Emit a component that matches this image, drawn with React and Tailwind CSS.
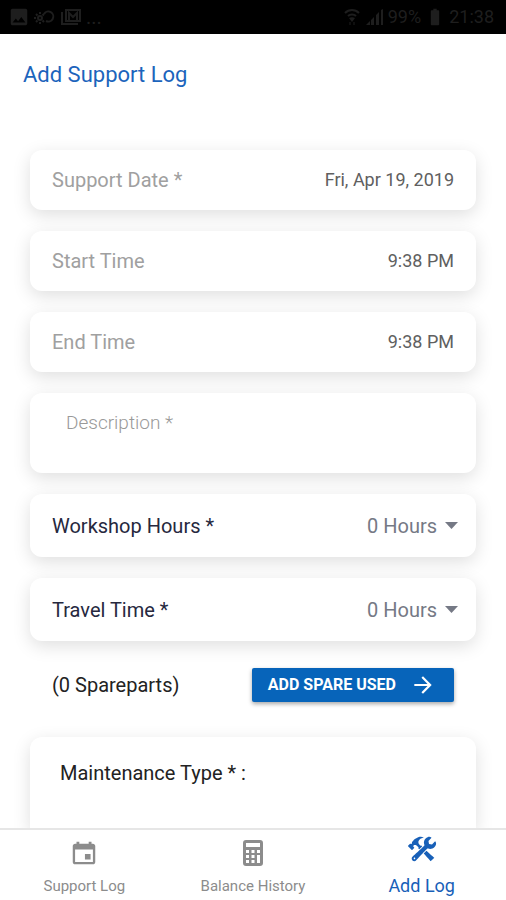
import { useState } from 'react';
import { IoIosConstruct, IoMdArrowForward, IoMdCalendar } from 'react-icons/io';
import { MdBatteryFull, MdImage } from 'react-icons/md';

function CalculatorIcon({ size }) {
  return (
    <svg width={size} height={size} viewBox="0 0 30 30" fill="currentColor">
      <path
        fillRule="evenodd"
        d="M8 2h14a3 3 0 0 1 3 3v20a3 3 0 0 1-3 3H8a3 3 0 0 1-3-3V5a3 3 0 0 1 3-3zM8 5v4h14V5zM8 12v3h3v-3zM13.500 12v3h3v-3zM19 12v3h3v-3zM8 17v3h3v-3zM13.500 17v3h3v-3zM19 17v8h3v-8zM8 22v3h3v-3zM13.500 22v3h3v-3z"
      />
    </svg>
  );
}

const tabs = [
  { key: 'support', label: 'Support Log', icon: IoMdCalendar },
  { key: 'balance', label: 'Balance History', icon: CalculatorIcon },
  { key: 'add', label: 'Add Log', icon: IoIosConstruct },
];

const hours = Array.from({ length: 13 }, (_, i) => i);

const card = 'rounded-xl bg-white shadow-[0_5px_18px_rgba(0,0,0,0.13)]';

function StatusBar() {
  return (
    <div className="flex h-[34px] shrink-0 items-center justify-between bg-black pr-3 pl-2 text-[#1e1e1e]">
      <div className="flex items-center gap-1">
        <MdImage size={22} />
        <svg width="22" height="16" viewBox="0 0 22 16" fill="none" stroke="currentColor" strokeWidth="2">
          <path d="M10 5a5 5 0 1 1 2 7" />
          <circle cx="6" cy="9" r="2" />
          <path d="M6 3v2M6 13v2M0 9h2M2 5l1.500 1.500M2 13l1.500-1.500M10 5L8.500 6.500M10 13l-1.500-1.500" />
        </svg>
        <svg width="22" height="18" viewBox="0 0 22 18" fill="none" stroke="currentColor" strokeWidth="2">
          <path d="M2 4v12h16" />
          <path d="M6 2h14v11H6z" />
          <path d="M9 12V5l4 4 4-4v7" />
        </svg>
        <span className="text-xl leading-6">...</span>
      </div>
      <div className="flex items-center gap-1 text-lg">
        <svg width="18" height="18" viewBox="0 0 18 18" fill="none" stroke="currentColor" strokeWidth="2">
          <path d="M2 5c4-4 10-4 14 0M5 8c2-2 6-2 8 0" />
          <path d="M6 10c2-1 4-1 6 0l-3 4z" fill="currentColor" stroke="none" />
          <path d="M7 14v3M11 14v3" strokeWidth="1" />
        </svg>
        <svg width="19" height="18" viewBox="0 0 19 18" fill="currentColor">
          <path d="M1 17l4-4v4zM6 12l3-3v8H6zM11 7l3-3v13h-3zM16 2l2-1v16h-2z" />
        </svg>
        <span>99%</span>
        <MdBatteryFull size={20} />
        <span>21:38</span>
      </div>
    </div>
  );
}

function PickerField({ id, label, value, onChange }) {
  return (
    <div className={`flex h-[60px] items-center justify-between px-[22px] ${card}`}>
      <label htmlFor={id} className="shrink-0 text-xl text-[#a0a0a0]">{label}</label>
      <input id={id} type="text" value={value} onChange={e => onChange(e.target.value)} className="min-w-0 flex-1 text-right text-lg text-[#606060] outline-none" />
    </div>
  );
}

function HoursField({ id, label, value, onChange }) {
  return (
    <div className={`flex h-[63px] items-center justify-between pr-[18px] pl-[22px] ${card}`}>
      <label htmlFor={id} className="text-xl text-[#26283e]">{label}</label>
      <div className="flex items-center gap-2 text-[#757985]">
        <select id={id} value={value} onChange={e => onChange(Number(e.target.value))} className="appearance-none text-right text-xl outline-none">
          {hours.map(h => <option key={h} value={h}>{h} Hours</option>)}
        </select>
        <svg width="13" height="7" viewBox="0 0 13 7" fill="currentColor"><path d="M0 0h13L6.500 7z" /></svg>
      </div>
    </div>
  );
}

export default function App() {
  const [date, setDate] = useState('Fri, Apr 19, 2019');
  const [start, setStart] = useState('9:38 PM');
  const [end, setEnd] = useState('9:38 PM');
  const [description, setDescription] = useState('');
  const [workshop, setWorkshop] = useState(0);
  const [travel, setTravel] = useState(0);
  const [active, setActive] = useState('add');

  return (
    <div className="flex h-screen flex-col overflow-hidden bg-white font-[Roboto,sans-serif]">
      <StatusBar />

      <header className="flex h-20 shrink-0 items-center px-[23px]">
        <h1 className="text-[22px] text-[#1c64bc]">Add Support Log</h1>
      </header>

      <main className="flex min-h-0 flex-1 flex-col overflow-hidden px-[30px] pt-9">
        <form className="flex flex-1 flex-col gap-[21px]" onSubmit={e => e.preventDefault()}>
          <PickerField id="date" label="Support Date *" value={date} onChange={setDate} />
          <PickerField id="start" label="Start Time" value={start} onChange={setStart} />
          <PickerField id="end" label="End Time" value={end} onChange={setEnd} />

          <textarea
            aria-label="Description"
            placeholder="Description *"
            value={description}
            onChange={e => setDescription(e.target.value)}
            className={`block h-20 w-full shrink-0 resize-none px-9 py-4 text-[19px] leading-7 font-light text-[#555] outline-none placeholder:text-[#999] ${card}`}
          />

          <HoursField id="workshop" label="Workshop Hours *" value={workshop} onChange={setWorkshop} />
          <HoursField id="travel" label="Travel Time *" value={travel} onChange={setTravel} />

          {/* Spare parts */}
          <div className="flex items-center justify-between px-[22px] pt-1.5 pb-3.5">
            <span className="text-xl text-[#222]">(0 Spareparts)</span>
            <button type="button" className="flex h-[34px] items-center gap-3.5 rounded-xs bg-[#0764ba] pr-[18px] pl-4 text-base font-bold text-white shadow-[0_2px_4px_rgba(0,0,0,0.35)]">
              ADD SPARE USED
              <IoMdArrowForward size={26} />
            </button>
          </div>

          <section className={`min-h-[92px] flex-1 rounded-b-none px-[30px] pt-[22px] ${card}`}>
            <h2 className="text-xl text-[#222]">Maintenance Type * :</h2>
          </section>
        </form>
      </main>

      <nav className="relative grid h-[72px] shrink-0 grid-cols-3 border-t-2 border-[#e6e6e6] bg-white">
        {tabs.map(({ key, label, icon: Icon }) => (
          <button
            key={key}
            type="button"
            onClick={() => setActive(key)}
            className={`flex flex-col items-center justify-between pb-0.5 ${active === key ? 'pt-1 text-lg text-[#1860b8]' : 'pt-2 text-[15px] text-[#8c8c8c]'}`}
          >
            <Icon size={30} />
            <span className="leading-6">{label}</span>
          </button>
        ))}
      </nav>
    </div>
  );
}
